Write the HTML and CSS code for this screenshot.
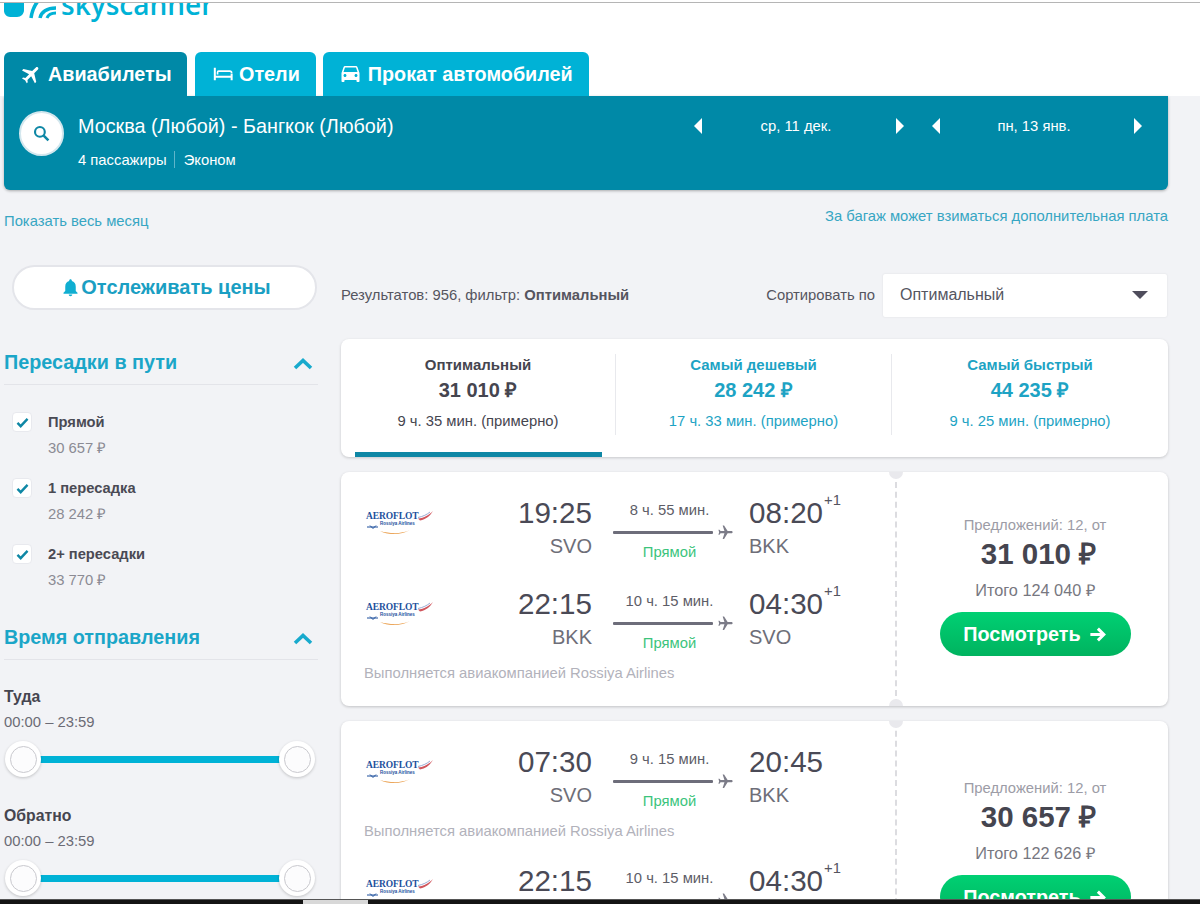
FILE: index.html
```html
<!DOCTYPE html>
<html lang="ru">
<head>
<meta charset="utf-8">
<title>Skyscanner — Москва - Бангкок</title>
<link rel="stylesheet" href="styles.css">
</head>
<body>
<svg class="defs" width="0" height="0" aria-hidden="true">
  <symbol id="i-plane" viewBox="0 0 24 24"><path d="M21 16v-2l-8-5V3.500c0-.83-.67-1.500-1.500-1.500S10 2.670 10 3.500V9l-8 5v2l8-2.500V19l-2 1.500V22l3.500-1 3.500 1v-1.500L13 19v-5.500l8 2.500z"/></symbol>
  <symbol id="i-check" viewBox="0 0 14 12"><path d="M1.500 6.500 5 10l7.500-8" fill="none" stroke="#0e87a5" stroke-width="2.600"/></symbol>
  <symbol id="i-chev" viewBox="0 0 20 12"><path d="M2 10l8-7.500L18 10" fill="none" stroke="#18aacd" stroke-width="3.600"/></symbol>
  <symbol id="i-arrow" viewBox="0 0 24 24"><path d="M3 12h17M12.500 4.500 20 12l-7.500 7.500" fill="none" stroke="#fff" stroke-width="3.800"/></symbol>
</svg>

<div class="page">
  <header class="header">
    <div class="logo-clip">
      <div class="logo">
        <svg class="logo-mark" viewBox="0 0 54 22" aria-hidden="true">
          <path d="M0 0h20v9c0 4-3 7-7 7H6c-3 0-6-3-6-6z" fill="#00b2d6"/>
          <path d="M27 17C28 10 30 5 34 0" fill="none" stroke="#00b2d6" stroke-width="3.500"/>
          <path d="M36 17c1-6 7-10 16-10" fill="none" stroke="#00b2d6" stroke-width="3.500"/>
          <path d="M43 17c1-3 4-5 9-5" fill="none" stroke="#00b2d6" stroke-width="3"/>
        </svg>
        <span class="logo-text">skyscanner</span>
      </div>
    </div>
    <nav class="tabs">
      <a class="tab tab-active">
        <svg class="tab-icon icon-rot45"><use href="#i-plane"/></svg>Авиабилеты
      </a>
      <a class="tab">
        <svg class="tab-icon" viewBox="0 0 22 18" aria-hidden="true">
          <path d="M2 2v14M20.500 16V8.500M2 12h18.500" fill="none" stroke="#fff" stroke-width="2.200"/>
          <path d="M5 9.500V7c0-.8.5-1.200 1.200-1.200h12.300c1.200 0 2 .8 2 2" fill="none" stroke="#fff" stroke-width="1.800"/>
        </svg>Отели
      </a>
      <a class="tab">
        <svg class="tab-icon tab-icon-car" viewBox="3 4 18 18" aria-hidden="true"><path d="M18.920 6.010C18.720 5.420 18.160 5 17.500 5h-11c-.66 0-1.210.42-1.420 1.010L3 12v8c0 .55.45 1 1 1h1c.55 0 1-.45 1-1v-1h12v1c0 .55.45 1 1 1h1c.55 0 1-.45 1-1v-8l-2.080-5.990zM6.500 16c-.83 0-1.500-.67-1.500-1.500S5.670 13 6.500 13s1.500.67 1.500 1.500S7.330 16 6.500 16zm11 0c-.83 0-1.500-.67-1.500-1.500s.67-1.500 1.500-1.500 1.500.67 1.500 1.500-.67 1.500-1.500 1.500zM5 11l1.500-4.500h11L19 11H5z" fill="#fff"/></svg>Прокат автомобилей
      </a>
    </nav>
  </header>

  <section class="search">
    <div class="search-btn">
      <svg viewBox="0 0 16 16" class="search-icon" aria-hidden="true"><circle cx="6.500" cy="6.500" r="4.600" fill="none" stroke="#0e87a5" stroke-width="2"/><path d="M10 10l4.500 4.500" stroke="#0e87a5" stroke-width="2.400"/></svg>
    </div>
    <div class="route">
      <div class="route-title">Москва (Любой) - Бангкок (Любой)</div>
      <div class="route-sub"><span class="route-pax">4 пассажиры</span><span>Эконом</span></div>
    </div>
    <div class="dates">
      <div class="date"><i class="tri tri-l"></i><span class="date-text">ср, 11 дек.</span><i class="tri tri-r"></i></div>
      <div class="date"><i class="tri tri-l"></i><span class="date-text">пн, 13 янв.</span><i class="tri tri-r"></i></div>
    </div>
  </section>

  <div class="notes">
    <a class="note-month">Показать весь месяц</a>
    <a class="note-bag">За багаж может взиматься дополнительная плата</a>
  </div>

  <div class="layout">
    <aside class="sidebar">
      <button class="track">
        <svg class="bell" viewBox="0 0 24 24" aria-hidden="true"><path d="M12 22c1.100 0 2-.9 2-2h-4c0 1.100.89 2 2 2zm6-6v-5c0-3.070-1.640-5.640-4.500-6.320V4c0-.83-.67-1.500-1.500-1.500s-1.500.67-1.500 1.500v.68C7.630 5.360 6 7.920 6 11v5l-2 2v1h16v-1l-2-2z"/></svg>Отслеживать цены
      </button>

      <div class="filter-head">
        <h3>Пересадки в пути</h3>
        <svg class="chev"><use href="#i-chev"/></svg>
      </div>
      <ul class="stops">
        <li class="stop">
          <span class="box"><svg class="tick"><use href="#i-check"/></svg></span>
          <div><div class="stop-name">Прямой</div><div class="stop-price">30 657 ₽</div></div>
        </li>
        <li class="stop">
          <span class="box"><svg class="tick"><use href="#i-check"/></svg></span>
          <div><div class="stop-name">1 пересадка</div><div class="stop-price">28 242 ₽</div></div>
        </li>
        <li class="stop">
          <span class="box"><svg class="tick"><use href="#i-check"/></svg></span>
          <div><div class="stop-name">2+ пересадки</div><div class="stop-price">33 770 ₽</div></div>
        </li>
      </ul>

      <div class="filter-head filter-head-time">
        <h3>Время отправления</h3>
        <svg class="chev"><use href="#i-chev"/></svg>
      </div>
      <div class="times">
        <div class="time-group">
          <div class="time-name">Туда</div>
          <div class="time-range">00:00 – 23:59</div>
          <div class="slider"><span class="thumb"></span><span class="track-bar"></span><span class="thumb"></span></div>
        </div>
        <div class="time-group">
          <div class="time-name">Обратно</div>
          <div class="time-range">00:00 – 23:59</div>
          <div class="slider"><span class="thumb"></span><span class="track-bar"></span><span class="thumb"></span></div>
        </div>
      </div>
    </aside>

    <main class="results">
      <div class="results-bar">
        <div class="results-count">Результатов: 956, фильтр: <b>Оптимальный</b></div>
        <div class="sort-label">Сортировать по</div>
        <div class="select"><span>Оптимальный</span><i class="select-arrow"></i></div>
      </div>

      <div class="summary">
        <div class="sum sum-active">
          <div class="sum-name">Оптимальный</div>
          <div class="sum-price">31 010 ₽</div>
          <div class="sum-time">9 ч. 35 мин. (примерно)</div>
        </div>
        <div class="sum">
          <div class="sum-name">Самый дешевый</div>
          <div class="sum-price">28 242 ₽</div>
          <div class="sum-time">17 ч. 33 мин. (примерно)</div>
        </div>
        <div class="sum">
          <div class="sum-name">Самый быстрый</div>
          <div class="sum-price">44 235 ₽</div>
          <div class="sum-time">9 ч. 25 мин. (примерно)</div>
        </div>
      </div>

      <article class="ticket">
        <div class="flights">
          <div class="leg">
            <div class="airline"><div class="af"><span class="af-name">AEROFLOT</span><span class="af-sub">Rossiya Airlines</span><svg class="af-art" viewBox="0 0 68 26" aria-hidden="true"><path d="M52 8.500C58 8 63 5 67 1 64 6 60 9.500 54 10.500z" fill="#d0555c"/><path d="M52 7.500c5-1 9-3 12-5.500" stroke="#7f95c8" stroke-width=".8" fill="none"/><path d="M14 21c10 3 22 3 30-1-8 5-23 5-30 1z" fill="#e8963c"/><path d="M1 17h11M4 15.500l3 3 3-3" stroke="#1c4f9c" fill="none"/></svg></div></div>
            <div class="dep"><div class="time">19:25</div><div class="code">SVO</div></div>
            <div class="mid"><div class="dur">8 ч. 55 мин.</div><div class="line"><span class="bar"></span><svg class="lplane"><use href="#i-plane"/></svg></div><div class="direct">Прямой</div></div>
            <div class="arr"><div class="time">08:20<sup>+1</sup></div><div class="code">BKK</div></div>
          </div>
          <div class="leg">
            <div class="airline"><div class="af"><span class="af-name">AEROFLOT</span><span class="af-sub">Rossiya Airlines</span><svg class="af-art" viewBox="0 0 68 26" aria-hidden="true"><path d="M52 8.500C58 8 63 5 67 1 64 6 60 9.500 54 10.500z" fill="#d0555c"/><path d="M52 7.500c5-1 9-3 12-5.500" stroke="#7f95c8" stroke-width=".8" fill="none"/><path d="M14 21c10 3 22 3 30-1-8 5-23 5-30 1z" fill="#e8963c"/><path d="M1 17h11M4 15.500l3 3 3-3" stroke="#1c4f9c" fill="none"/></svg></div></div>
            <div class="dep"><div class="time">22:15</div><div class="code">BKK</div></div>
            <div class="mid"><div class="dur">10 ч. 15 мин.</div><div class="line"><span class="bar"></span><svg class="lplane"><use href="#i-plane"/></svg></div><div class="direct">Прямой</div></div>
            <div class="arr"><div class="time">04:30<sup>+1</sup></div><div class="code">SVO</div></div>
          </div>
          <div class="operated">Выполняется авиакомпанией Rossiya Airlines</div>
        </div>
        <div class="offer">
          <div class="offer-count">Предложений: 12, от</div>
          <div class="offer-price">31 010 ₽</div>
          <div class="offer-total">Итого 124 040 ₽</div>
          <button class="view">Посмотреть<svg class="view-arrow"><use href="#i-arrow"/></svg></button>
        </div>
      </article>

      <article class="ticket">
        <div class="flights">
          <div class="leg">
            <div class="airline"><div class="af"><span class="af-name">AEROFLOT</span><span class="af-sub">Rossiya Airlines</span><svg class="af-art" viewBox="0 0 68 26" aria-hidden="true"><path d="M52 8.500C58 8 63 5 67 1 64 6 60 9.500 54 10.500z" fill="#d0555c"/><path d="M52 7.500c5-1 9-3 12-5.500" stroke="#7f95c8" stroke-width=".8" fill="none"/><path d="M14 21c10 3 22 3 30-1-8 5-23 5-30 1z" fill="#e8963c"/><path d="M1 17h11M4 15.500l3 3 3-3" stroke="#1c4f9c" fill="none"/></svg></div></div>
            <div class="dep"><div class="time">07:30</div><div class="code">SVO</div></div>
            <div class="mid"><div class="dur">9 ч. 15 мин.</div><div class="line"><span class="bar"></span><svg class="lplane"><use href="#i-plane"/></svg></div><div class="direct">Прямой</div></div>
            <div class="arr"><div class="time">20:45</div><div class="code">BKK</div></div>
          </div>
          <div class="operated operated-mid">Выполняется авиакомпанией Rossiya Airlines</div>
          <div class="leg">
            <div class="airline"><div class="af"><span class="af-name">AEROFLOT</span><span class="af-sub">Rossiya Airlines</span><svg class="af-art" viewBox="0 0 68 26" aria-hidden="true"><path d="M52 8.500C58 8 63 5 67 1 64 6 60 9.500 54 10.500z" fill="#d0555c"/><path d="M52 7.500c5-1 9-3 12-5.500" stroke="#7f95c8" stroke-width=".8" fill="none"/><path d="M14 21c10 3 22 3 30-1-8 5-23 5-30 1z" fill="#e8963c"/><path d="M1 17h11M4 15.500l3 3 3-3" stroke="#1c4f9c" fill="none"/></svg></div></div>
            <div class="dep"><div class="time">22:15</div><div class="code">BKK</div></div>
            <div class="mid"><div class="dur">10 ч. 15 мин.</div><div class="line"><span class="bar"></span><svg class="lplane"><use href="#i-plane"/></svg></div><div class="direct">Прямой</div></div>
            <div class="arr"><div class="time">04:30<sup>+1</sup></div><div class="code">SVO</div></div>
          </div>
          <div class="operated">Выполняется авиакомпанией Rossiya Airlines</div>
        </div>
        <div class="offer">
          <div class="offer-count">Предложений: 12, от</div>
          <div class="offer-price">30 657 ₽</div>
          <div class="offer-total">Итого 122 626 ₽</div>
          <button class="view">Посмотреть<svg class="view-arrow"><use href="#i-arrow"/></svg></button>
        </div>
      </article>
    </main>
  </div>
</div>
<div class="taskbar"><span class="task-item"></span></div>
</body>
</html>
```

FILE: styles.css
```css
* { box-sizing: border-box; }
html, body { margin: 0; height: 904px; overflow: hidden; }
body {
  background: #f2f3f6;
  font-family: "Liberation Sans", Arial, sans-serif;
  color: #45454f;
  font-size: 14.8px;
  position: relative;
}
.defs { position: absolute; }
.page { height: 904px; overflow: hidden; }
ul { list-style: none; margin: 0; padding: 0; }
h3 { margin: 0; }
button { font-family: inherit; cursor: pointer; }

/* header */
.header {
  height: 96px;
  background: #fff;
  padding-top: 2px;
}
.logo-clip {
  height: 50px;
  border-top: 1px solid #b5b5b5;
  overflow: hidden;
}
.logo {
  display: flex;
  align-items: flex-start;
  margin-left: 4px;
}
.logo-mark { width: 54px; height: 22px; flex: none; display: block; margin-top: -2px; }
.logo-text {
  font-family: "Open Sans", sans-serif;
  font-size: 28px;
  font-weight: 600;
  line-height: 34px;
  color: #00b2d6;
  margin-top: -16px;
  margin-left: 3px;
}
.tabs { display: flex; gap: 7px; padding-left: 4px; }
.tab {
  height: 44px;
  display: flex;
  align-items: center;
  background: #00b2d6;
  color: #fff;
  font-size: 19.8px;
  font-weight: 700;
  border-radius: 6px 6px 0 0;
  padding: 0 16px 0 18px;
}
.tab-active { background: #0089a7; width: 183px; margin-right: 1px; padding-left: 16px; }
.tab-icon { width: 20px; height: 18px; margin-right: 6px; fill: #fff; flex: none; }
.tab-icon-car { width: 19px; margin-right: 8px; }
.icon-rot45 { transform: rotate(45deg); width: 23px; height: 23px; margin-right: 5px; }

/* search panel */
.search {
  margin-left: 4px;
  width: 1164px;
  height: 94px;
  background: #0089a7;
  border-radius: 0 0 6px 6px;
  box-shadow: 0 1px 3px rgba(0, 0, 0, .3);
  padding: 15px 26px 0 15px;
  display: flex;
  align-items: flex-start;
  color: #fff;
}
.search-btn {
  width: 45px;
  height: 45px;
  border-radius: 50%;
  background: #fff;
  border: 2px solid #d3e7ee;
  display: flex;
  align-items: center;
  justify-content: center;
  flex: none;
}
.search-icon { width: 17px; height: 17px; }
.route { margin-left: 14px; }
.route-title { font-size: 19.800px; line-height: 30px; }
.route-sub { display: flex; margin-top: 9px; line-height: 20px; }
.route-pax { padding-right: 7px; margin-right: 9px; border-right: 1px solid #5fb5ca; height: 17px; line-height: 18px; margin-top: 1px; }
.dates { margin-left: auto; display: flex; gap: 28px; }
.date {
  width: 210px;
  height: 30px;
  display: flex;
  align-items: center;
  justify-content: space-between;
}
.date-text { margin-right: 6px; }
.tri { width: 0; height: 0; border-top: 8px solid transparent; border-bottom: 8px solid transparent; }
.tri-l { border-right: 8px solid #fff; }
.tri-r { border-left: 8px solid #fff; }

/* notes */
.notes {
  height: 75px;
  display: flex;
  justify-content: space-between;
  padding-left: 4px;
  width: 1168px;
  color: #37a6c3;
}
.note-month { margin-top: 21px; line-height: 20px; }
.note-bag { margin-top: 16px; line-height: 20px; }

/* layout */
.layout { display: flex; padding-left: 4px; gap: 23px; width: 1168px; }
.sidebar { width: 314px; flex: none; }
.results { width: 827px; flex: none; padding-top: 8px; }

/* sidebar */
.track {
  display: flex;
  align-items: center;
  justify-content: center;
  margin-left: 8px;
  width: 305px;
  height: 45px;
  border: 2px solid #e4e5ea;
  border-radius: 23px;
  background: #fff;
  color: #1a9fc3;
  font-size: 20px;
  font-weight: 700;
  padding: 0 0 0 2px;
}
.bell { width: 21px; height: 21px; fill: #10aed1; margin-right: 0; }
.filter-head {
  margin-top: 30px;
  height: 45px;
  border-bottom: 1px solid #e3e4e9;
  display: flex;
  align-items: center;
  justify-content: space-between;
  padding-right: 5px;
}
.filter-head h3 { font-size: 19.800px; line-height: 44px; color: #1ba6c8; font-weight: 700; }
.chev { width: 20px; height: 12px; margin-top: 3px; }
.filter-head-time { margin-top: 5px; }
.stops { padding: 27px 0 0 8px; }
.stop { display: flex; height: 66px; }
.box {
  width: 20px;
  height: 20px;
  border-radius: 4px;
  background: #fff;
  border: 1px solid #e8e9ee;
  display: flex;
  align-items: center;
  justify-content: center;
  margin-right: 16px;
  flex: none;
}
.tick { width: 13px; height: 11px; }
.stop-name { font-weight: 700; line-height: 20px; font-size: 14.700px; color: #4a4a54; }
.stop-price { line-height: 20px; margin-top: 6px; color: #8b8b94; }
.times { padding-top: 27px; }
.time-group { height: 119px; }
.time-name { font-weight: 700; line-height: 20px; font-size: 15.800px; }
.time-range { line-height: 20px; margin-top: 5px; color: #6b6b75; }
.slider { display: flex; align-items: center; margin-top: 9px; margin-left: 1px; width: 310px; }
.thumb {
  width: 36px;
  height: 36px;
  border-radius: 50%;
  background: #fff;
  box-shadow: 0 1px 3px rgba(0, 0, 0, .2);
  flex: none;
  position: relative;
  z-index: 1;
  display: flex;
  align-items: center;
  justify-content: center;
}
.thumb::after {
  content: "";
  width: 25px;
  height: 25px;
  border: 1px solid #c9c9ce;
  border-radius: 50%;
  background: #fcfcfd;
}
.track-bar { flex: 1; height: 7px; background: #00b2d6; margin: 0 -1px; }

/* results bar */
.results-bar { display: flex; align-items: center; height: 44px; }
.results-count { flex: 1; color: #55555f; }
.sort-label { margin-right: 8px; color: #55555f; }
.select {
  width: 284px;
  height: 43px;
  margin-right: 1px;
  background: #fff;
  border-radius: 2px;
  box-shadow: 0 0 2px rgba(0, 0, 0, .1);
  display: flex;
  align-items: center;
  justify-content: space-between;
  padding: 0 19px 0 17px;
  font-size: 16px;
  color: #55555f;
}
.select-arrow { width: 0; height: 0; border-left: 8px solid transparent; border-right: 8px solid transparent; border-top: 8px solid #4f4d5c; }

/* summary */
.summary {
  margin-top: 22px;
  height: 118px;
  background: #fff;
  border-radius: 8px;
  box-shadow: 0 1px 3px rgba(0, 0, 0, .18);
  display: grid;
  grid-template-columns: 274px 276px 277px;
  position: relative;
  padding-top: 15px;
  overflow: hidden;
}
.sum { height: 81px; text-align: center; color: #1da3c4; border-left: 1px solid #e8e9ed; }
.sum-active { color: #45454f; border-left: 0; }
.sum-active::after {
  content: "";
  position: absolute;
  left: 14px;
  bottom: 0;
  width: 247px;
  height: 5px;
  background: #0e87a5;
}
.sum-name { font-weight: 700; font-size: 15px; line-height: 20px; margin-top: 1px; }
.sum-price { font-weight: 700; font-size: 20px; line-height: 26px; margin-top: 2px; }
.sum-time { line-height: 20px; margin-top: 8px; }

/* tickets */
.ticket {
  margin-top: 15px;
  background: #fff;
  border-radius: 8px;
  box-shadow: 0 1px 3px rgba(0, 0, 0, .2);
  display: flex;
}
.flights { width: 555px; flex: none; padding: 23px 0 23px 25px; }
.leg { display: grid; grid-template-columns: 130px 96px 120px 100px; column-gap: 0; height: 62px; }
.leg + .leg { margin-top: 29px; }
.airline { padding-top: 15px; }
.af { position: relative; width: 68px; height: 26px; display: flex; flex-direction: column; }
.af-name { font-family: "Liberation Serif", serif; font-weight: 700; font-size: 9.500px; line-height: 10px; color: #1c4f9c; padding-top: 1px; letter-spacing: -.1px; }
.af-sub { font-size: 4.500px; line-height: 6px; padding-left: 14px; color: #1c4f9c; font-weight: 700; }
.af-art { position: absolute; left: 0; top: 0; width: 68px; height: 26px; }
.dep { text-align: right; }
.time { font-size: 29.600px; line-height: 36px; color: #4a4a56; white-space: nowrap; position: relative; }
.time sup { font-size: 14.800px; line-height: 0; position: relative; top: -2px; vertical-align: 16px; margin-left: 1px; color: #55555f; }
.code { font-size: 20px; line-height: 22px; margin-top: 4px; color: #6e6e78; }
.mid { padding: 0 7px 0 21px; width: 141px; margin-right: -21px; text-align: center; position: relative; }
.dur { line-height: 20px; margin-top: 5px; color: #5d5d67; white-space: nowrap; }
.line { position: relative; height: 14px; margin-top: 0; width: 100px; top: 5px; }
.bar { position: absolute; left: 0; right: 0; top: 6px; height: 3px; background: #6d6d7a; border-radius: 1px; }
.lplane { position: absolute; left: 104px; top: -1px; width: 17px; height: 17px; fill: #7c7c88; transform: rotate(90deg); }
.direct { color: #3cc47c; line-height: 20px; margin-top: 8px; }
.arr { padding-left: 37px; width: 160px; }
.operated { color: #b2b2bb; line-height: 20px; margin-top: 15px; margin-left: -2px; }
.operated-mid { margin-bottom: 22px; }
.offer {
  flex: 1;
  border-left: 2px dashed #dcdce0;
  margin-left: -1px;
  display: flex;
  flex-direction: column;
  align-items: center;
  justify-content: center;
  padding: 0 0 7px 5px;
  position: relative;
}
.offer::before, .offer::after {
  content: "";
  position: absolute;
  left: -8px;
  width: 14px;
  height: 7px;
  background: #e9e9ed;
}
.offer::before { top: 0; border-radius: 0 0 7px 7px; }
.offer::after { bottom: 0; border-radius: 7px 7px 0 0; }
.offer-count { line-height: 20px; color: #9c9ca6; }
.offer-price { font-size: 29.500px; font-weight: 700; line-height: 36px; margin-top: 1px; color: #45454f; padding-left: 7px; }
.offer-total { font-size: 16.300px; line-height: 20px; margin-top: 8px; color: #777780; }
.view {
  width: 191px;
  height: 44px;
  margin-top: 12px;
  border: 0;
  border-radius: 22px;
  background: linear-gradient(#00d073, #00b35f);
  color: #fff;
  font-size: 19.800px;
  font-weight: 700;
  display: flex;
  align-items: center;
  justify-content: center;
  flex: none;
  padding: 0;
}
.view-arrow { width: 19px; height: 19px; margin-left: 7px; }

/* taskbar */
.taskbar {
  position: absolute;
  left: 0;
  right: 0;
  top: 899px;
  height: 5px;
  background: #141414;
  border-top: 1px solid #555;
}
.task-item { position: absolute; left: 303px; top: 0; width: 65px; height: 4px; background: #d8d8d8; }
```
